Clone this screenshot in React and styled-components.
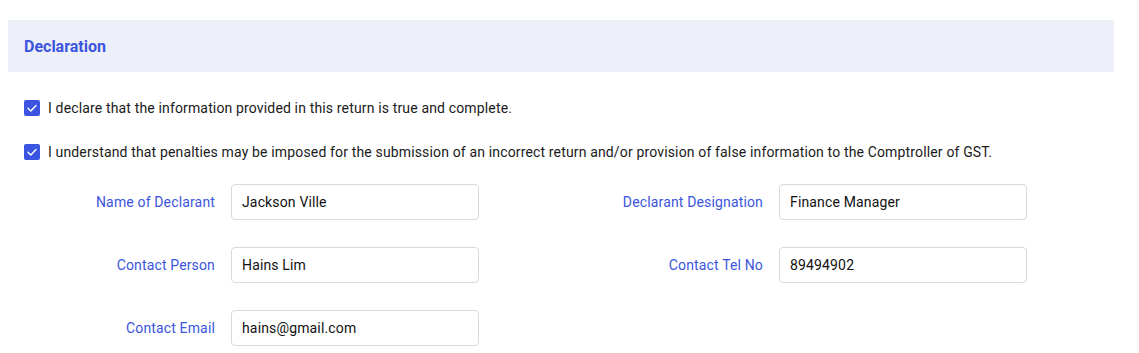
import React from 'react'
import styled, { createGlobalStyle } from 'styled-components'

const Global = createGlobalStyle`
  body {
    margin: 0;
    background: #fff;
    font-family: Roboto, "Liberation Sans", sans-serif;
  }
`

const fields = [
  { label: 'Name of Declarant', value: 'Jackson Ville' },
  { label: 'Declarant Designation', value: 'Finance Manager' },
  { label: 'Contact Person', value: 'Hains Lim' },
  { label: 'Contact Tel No', value: '89494902' },
  { label: 'Contact Email', value: 'hains@gmail.com' },
]

function Check() {
  return (
    <Box>
      <svg width="12" height="12" viewBox="0 0 12 12">
        <path d="M2 6.2 L4.8 9 L10 3.4" fill="none" stroke="#fff" strokeWidth="1.4" strokeLinecap="round" strokeLinejoin="round" />
      </svg>
    </Box>
  )
}

export default function App() {
  return (
    <Page>
      <Global />
      <Header>Declaration</Header>
      <Checks>
        <CheckRow>
          <Check />
          I declare that the information provided in this return is true and complete.
        </CheckRow>
        <CheckRow>
          <Check />
          I understand that penalties may be imposed for the submission of an incorrect return and/or provision of false information to the Comptroller of GST.
        </CheckRow>
      </Checks>
      <Form>
        {fields.map((f) => (
          <Field key={f.label}>
            <Label>{f.label}</Label>
            <Input defaultValue={f.value} />
          </Field>
        ))}
      </Form>
    </Page>
  )
}

const Page = styled.div`
  padding: 20px 25px 0 8px;
  width: 1106px;
`

const Header = styled.div`
  height: 52px;
  background: #edf0f8;
  display: flex;
  align-items: center;
  padding-left: 16px;
  color: #3b55de;
  font-size: 16px;
  font-weight: 700;
`

const Checks = styled.div`
  display: flex;
  flex-direction: column;
  gap: 28px;
  padding: 28px 0 0 16px;
`

const CheckRow = styled.label`
  display: flex;
  align-items: center;
  gap: 8px;
  font-size: 14px;
  letter-spacing: 0.15px;
  color: #1a1a1a;
  line-height: 16px;
`

const Box = styled.span`
  width: 16px;
  height: 16px;
  border-radius: 2px;
  background: #3b55e0;
  display: flex;
  align-items: center;
  justify-content: center;
  flex-shrink: 0;
`

const Form = styled.div`
  display: grid;
  grid-template-columns: 548px 548px;
  row-gap: 27px;
  padding: 24px 0 0 16px;
`

const Field = styled.div`
  display: grid;
  grid-template-columns: 191px 248px;
  column-gap: 16px;
  align-items: center;
`

const Label = styled.span`
  text-align: right;
  color: #3b55de;
  font-size: 14px;
  letter-spacing: 0.15px;
`

const Input = styled.input`
  box-sizing: border-box;
  height: 36px;
  border: 1px solid #d9d9d9;
  border-radius: 4px;
  padding: 0 10px;
  font-family: Roboto, "Liberation Sans", sans-serif;
  font-size: 14px;
  letter-spacing: 0.15px;
  color: #111;
  outline: none;
`
